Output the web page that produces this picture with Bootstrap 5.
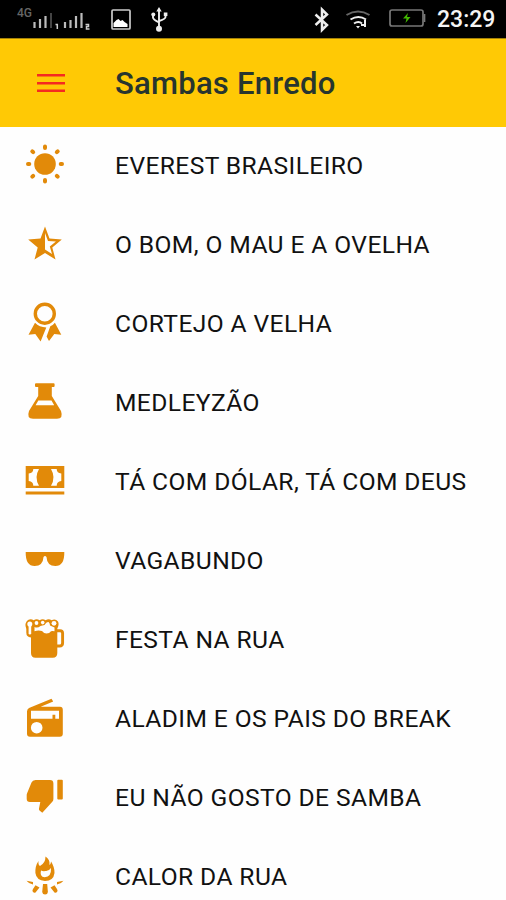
<!DOCTYPE html>
<html lang="pt-BR">
<head>
<meta charset="utf-8">
<meta name="viewport" content="width=device-width, initial-scale=1">
<title>Sambas Enredo</title>
<link href="https://cdn.jsdelivr.net/npm/bootstrap@5.3.0/dist/css/bootstrap.min.css" rel="stylesheet">
<style>
body{font-family:Roboto,"Liberation Sans",sans-serif;background:#fefefe;color:#111;height:900px}
svg{display:block;flex:none}
.statusbar{height:38px;background:#000}
.clock{font-size:23px;font-weight:500;line-height:38px;color:#f4f4f4;margin-left:-3px;padding-top:1px}
.topbar{height:89px;background:#ffc905;border-top:1px solid #a58308}
.menu-btn{width:28px;margin-left:37px;margin-right:50px}
.app-title{font-size:31px;font-weight:500;line-height:36px;color:#27352f;letter-spacing:.25px;padding-top:1px}
.songs{margin-top:-1px}
.song{height:79px;padding-left:20px}
.song svg{width:50px;height:49px;fill:#e28a09;color:#e28a09}
.song span{font-size:24.6px;line-height:30px;letter-spacing:.4px;margin-left:45px;white-space:nowrap}
</style>
</head>
<body class="overflow-hidden">
<header>
<div class="statusbar d-flex">
<svg width="440" height="38" viewBox="0 0 440 38">
<text x="17" y="17" font-family="Roboto" font-size="12" font-weight="500" fill="#666">4G</text>
<path d="M34.500 28v-6M40 28v-9M45.500 28V16M65 28v-6M70.500 28v-8M76 28V16M81.500 28V13" stroke="#bbb" stroke-width="2.200"/>
<path d="M51 28V13" stroke="#444" stroke-width="2"/>
<path d="M55.500 24.500h1.800V29M85.500 24.500h3v2h-2V29h3" fill="none" stroke="#ccc" stroke-width="1.500"/>
<rect x="112" y="10" width="18" height="19" rx="1" fill="none" stroke="#ccc" stroke-width="1.700"/>
<path d="M113.500 27v-4l3-3 2-1 2 2 2-1 2 2 3 2v3z" fill="#fff"/>
<g fill="none" stroke="#eee" stroke-width="1.900"><path d="M159 28V10M153 14.500v3q0 2 6 5M165.500 14.500v2.500q0 2-6.500 4"/></g>
<path d="M156.300 11.500 159 7l2.700 4.500zM163.800 12.500h3.600V16h-3.600z" fill="#eee"/><circle cx="153.300" cy="14.500" r="2" fill="#eee"/><circle cx="159" cy="28.700" r="3" fill="#eee"/>
<path d="m315.500 14.500 11.500 10.500-5 5V9.500l5 5L315.500 25" fill="none" stroke="#eee" stroke-width="2.500"/>
<g fill="none" stroke-width="2"><path d="M346.500 15q11.500-7 23 0" stroke="#666"/><path d="M350.500 19.500q8-5 15.500 0" stroke="#eee"/><path d="M354 23.500q4.500-3 8 0" stroke="#eee"/></g>
<path d="M356 26h4l-2 2.500zM364 20h2v7h-2zM361 24h3v2h-3z" fill="#eee"/>
<rect x="390" y="10" width="33" height="16" rx="2" fill="none" stroke="#777" stroke-width="1.700"/><path d="M424.500 14v8" stroke="#777" stroke-width="1.700"/>
<path d="m408 13-5 5.500h3.500L405.500 23l5-6H407z" fill="#42b900"/>
</svg>
<div class="clock">23:29</div>
</div>
<nav class="topbar d-flex align-items-center">
<svg class="menu-btn" height="22" viewBox="0 0 28 22" role="img" aria-label="Menu"><path d="M0 3.200h28M0 11.200h28M0 18.700h28" stroke="#f52a20" stroke-width="2.500"/></svg>
<h1 class="app-title m-0">Sambas Enredo</h1>
</nav>
</header>
<main class="songs">
<div class="song d-flex align-items-center"><svg viewBox="0 0 50 49"><circle cx="25" cy="23" r="10.800"/><g stroke="currentColor" stroke-width="4" stroke-linecap="round"><path d="M25 5.500V7M25 39v1.500M8 23h1.300M40.700 23H42M12.300 10.300l.9.900M37.700 10.300l-.9.900M12.300 35.700l.9-.9M37.700 35.700l-.9-.9"/></g></svg><span>EVEREST BRASILEIRO</span></div>
<div class="song d-flex align-items-center"><svg viewBox="0 0 50 49"><path fill-rule="evenodd" d="m25 6.500 4.500 12 12.300 1-9.500 8L35.500 39.500 25 33l-10.500 6.500 3.200-12-9.500-8 12.300-1zM25 13v16.600l7 4.400-2.200-7.600 6.100-4.900-7.900-.5z"/></svg><span>O BOM, O MAU E A OVELHA</span></div>
<div class="song d-flex align-items-center"><svg viewBox="0 0 50 49"><circle cx="24.800" cy="14.700" r="9.500" fill="none" stroke="currentColor" stroke-width="3.400"/><path d="M15 23.800 8.500 35.700l6.800-.8 5.300 7.600L26.300 28.500q-7-.3-11.300-4.700zM34.900 23.800 41.300 35.700l-7-.8-5.300 7.200-2.400-4.700L30.300 27.300q2.700-1 4.600-3.500z"/></svg><span>CORTEJO A VELHA</span></div>
<div class="song d-flex align-items-center"><svg viewBox="0 0 50 49"><path fill-rule="evenodd" d="M16 5.300h17.600q1 0 1 1v1.700q0 1-1 1h-1.800v9L41 33q2.600 7.700-4 7.700H13q-6.600 0-4-7.700l9.200-15V9h-2.200q-1 0-1-1V6.300q0-1 1-1zM18.300 22.600 15.600 27.300h18.600l-2.700-4.700z"/></svg><span>MEDLEYZÃO</span></div>
<div class="song d-flex align-items-center"><svg viewBox="0 0 50 49"><path fill-rule="evenodd" d="M5.700 9h38.600v22H5.700zM13.300 12q0 4-4.600 4.500v7.500q4.600.5 4.600 4.700H19q-5-8.300 0-16.700zM36.700 12q0 4 4.600 4.500v7.500q-4.600.5-4.600 4.700H31q5-8.300 0-16.700zM5.700 34.600h38.600v3H5.700z"/></svg><span>TÁ COM DÓLAR, TÁ COM DEUS</span></div>
<div class="song d-flex align-items-center"><svg viewBox="0 0 50 49"><path d="M5.700 16h38.600q.3 14-9 14-8.300 0-8.800-9-1.500-2-3 0-.5 9-8.800 9-9.300 0-9-14z"/></svg><span>VAGABUNDO</span></div>
<div class="song d-flex align-items-center"><svg viewBox="0 0 50 49"><path d="M8 5q3-1.600 5.600.2 3-1.800 6 0 3-1.800 6 0 3-1.800 6 0Q35.500 3.300 38 6.500q1.500 3-.7 7V38q0 4.700-4.500 4.700H15.500Q11 42.700 11 38V22.500Q6.300 22 6.300 17.500V14Q4 8 8 5z"/><g fill="#fefefe"><circle cx="9.800" cy="9" r="2.500"/><rect x="8.600" y="10" width="2.600" height="9.500" rx="1.300"/><circle cx="16.500" cy="8" r="1.900"/><circle cx="22.700" cy="7.600" r="1.800"/><circle cx="34" cy="8.300" r="2.400"/><path d="M14.500 12q3 1.600 6-1l4-1q2-3.500 4-3 1.500 1 1.500 3.500l4.500 2v3.800q-2.500-.8-3.500 0-1.500 2.300-4.500 2.300-2.500 0-4.500-2.500-3.500-1.500-7.500.2z"/></g><path d="M36 15.700h4q2.600 0 2.600 2.500V28q0 3-3 3H36" fill="none" stroke="currentColor" stroke-width="2.900"/></svg><span>FESTA NA RUA</span></div>
<div class="song d-flex align-items-center"><svg viewBox="0 0 50 49"><path fill-rule="evenodd" d="M9 14 31.500 4.700l1.700 2.800-12.500 5.300H40q2.800 0 2.800 3V39.700q0 3-3 3H10q-3 0-3-3V17.500Q7 15 9 14zM11 16.700v8h21.500v-4h2.800v4H39v-8zM22.500 33.700a5.800 5.800 0 1 0-11.600 0 5.800 5.800 0 1 0 11.600 0z"/></svg><span>ALADIM E OS PAIS DO BREAK</span></div>
<div class="song d-flex align-items-center"><svg viewBox="0 0 50 49"><path d="M15.500 7H30q3.400 0 3.400 3.400V26q0 1.800-1.300 3L22.300 39.700l-2.800-2.300q-.8-.7-.5-1.800L20.300 29H10q-3.300 0-3.300-3.300V22q0-.8.400-1.700L11.500 9.500Q12.500 7 15.500 7z"/><rect x="37.300" y="6.800" width="5.500" height="19.600" rx="1"/></svg><span>EU NÃO GOSTO DE SAMBA</span></div>
<div class="song d-flex align-items-center"><svg viewBox="0 0 50 49"><path fill-rule="evenodd" d="M25.500 4.500q4.800 3 4 8.500 1.300-1 1.600-3.500 3.700 6 3.400 11.500-1 8-9.500 8-8.600-.5-9.600-8-.4-7 3.100-12-.5 4 1.500 5 5.500-3 5.500-9.500zM21 18.500q-1.700 6.500 3.700 6.800 6.800-.3 6.300-9.300-2.500 3.500-5.500 3-2.500.5-4.500-.5z"/><path d="M6.500 28.800 13 30v2.600q-4-.6-6.500-3.800zM43.500 28.800 37 30v2.600q4-.6 6.500-3.800zM15.500 33.200l4 2.300-4 5q-1.600.6-2.700-.8-.8-1.400.2-2.800zM34.500 33.200l-4 2.300 4 5q1.600.6 2.700-.8.800-1.400-.2-2.800zM23 32h4.200l.7 8q-.3 2.600-2.800 2.600-2.600 0-2.900-2.600z"/></svg><span>CALOR DA RUA</span></div>
</main>
</body>
</html>
